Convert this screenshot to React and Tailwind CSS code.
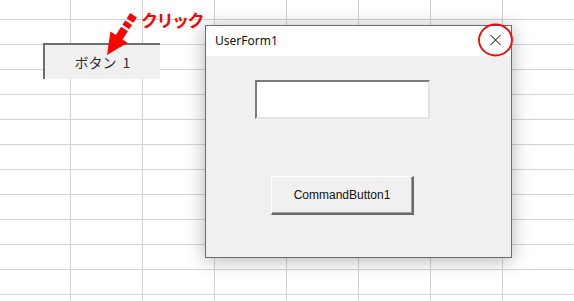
const cols = Array.from({ length: 9 });
const rows = Array.from({ length: 13 });

const SheetGrid = () => (
  <div className="ml-[-1px] mt-[-5px] flex flex-col">
    {rows.map((_, r) => (
      <div key={r} className="flex">
        {cols.map((_, c) => (
          <div key={c} className="h-[25px] w-[72px] shrink-0 border-b border-r border-[#d4d4d4]" />
        ))}
      </div>
    ))}
  </div>
);

const ClickArrow = () => (
  <svg className="absolute left-0 top-0" width="220" height="80" viewBox="0 0 220 80">
    <polygon points="107,55 110.5,31.5 127.5,42.8" fill="#ff0000" />
    <line x1="119" y1="37.5" x2="124.5" y2="29" stroke="#ff0000" strokeWidth="8" />
    <line x1="125.8" y1="27" x2="128.6" y2="22.7" stroke="#ff0000" strokeWidth="8" />
    <line x1="130" y1="20.6" x2="133.5" y2="15.2" stroke="#ff0000" strokeWidth="8" />
  </svg>
);

const UserForm = () => (
  <div className="absolute left-[205px] top-[25px] flex h-[233px] w-[307px] flex-col border border-[#6b6b6b] bg-[#f0f0f0] shadow-[0_2px_18px_rgba(0,0,0,0.3)]">
    <div className="flex h-[30px] items-center bg-white pl-[9px] font-['Noto_Sans'] text-[12px] text-[#111]">
      UserForm1
    </div>
    <div className="flex flex-col items-start">
      <div className="ml-[49px] mt-[24px] h-[39px] w-[175px] border-2 border-l-[#7a7a7a] border-t-[#7a7a7a] border-b-[#e3e3e3] border-r-[#e3e3e3] bg-white" />
      <div className="ml-[65px] mt-[57px] flex h-[39px] w-[143px] items-center justify-center border-l border-t border-white border-b-2 border-r-2 border-b-[#6a6a6a] border-r-[#6a6a6a] font-['Liberation_Sans'] text-[12px] font-light text-[#111] shadow-[inset_-1px_-1px_0_#a0a0a0]">
        CommandButton1
      </div>
    </div>
  </div>
);

const CloseMark = () => (
  <svg className="absolute left-[477px] top-[23px]" width="37" height="35" viewBox="0 0 37 35">
    <ellipse cx="18.5" cy="17" rx="16.5" ry="15.5" fill="none" stroke="#ff0000" strokeWidth="1.8" />
    <line x1="13.5" y1="12" x2="23.5" y2="22" stroke="#000" strokeWidth="1" />
    <line x1="23.5" y1="12" x2="13.5" y2="22" stroke="#000" strokeWidth="1" />
  </svg>
);

export default function App() {
  return (
    <div className="relative h-[301px] w-[574px] overflow-hidden bg-white">
      <SheetGrid />

      <div className="absolute left-[43px] top-[43px] flex h-[36px] w-[117px] items-center justify-center gap-[6px] border-l-2 border-t-2 border-[#6e6e6e] bg-[#f0f0f0] font-['Noto_Sans_CJK_JP',sans-serif] text-[14px] text-[#333]">
        <span>ボタン</span>
        <span>1</span>
      </div>

      <ClickArrow />
      <div className="absolute left-[141px] top-[9px] font-['Noto_Sans_CJK_JP',sans-serif] text-[17px] font-bold leading-[22px] tracking-[-1.5px] text-[#ff0000]">
        クリック
      </div>

      <UserForm />
      <CloseMark />
    </div>
  );
}
